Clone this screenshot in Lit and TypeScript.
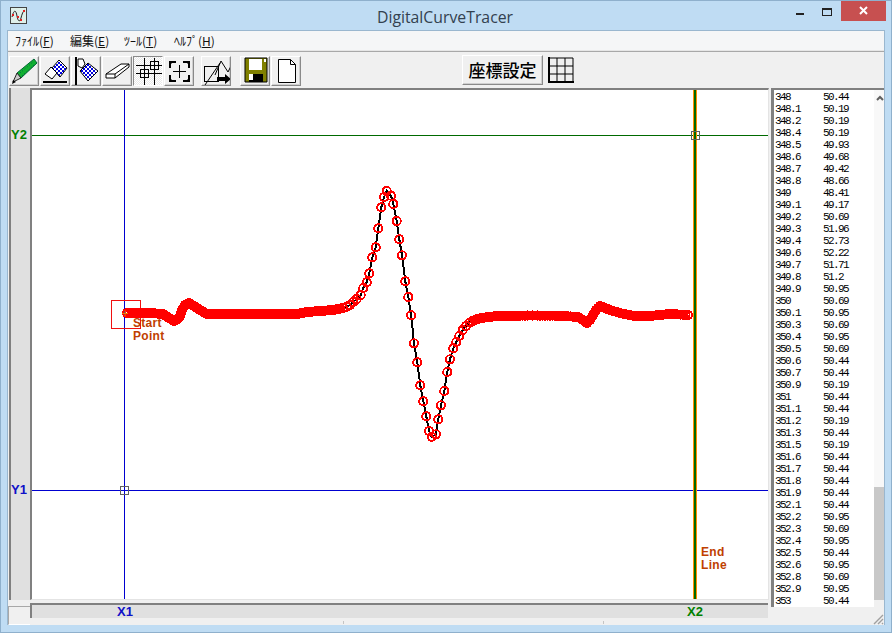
import { LitElement, html, svg, css } from "lit";
import { customElement } from "lit/decorators.js";

const ROWS: [string, string][] = [
  ["348", "50.44"], ["348.1", "50.19"], ["348.2", "50.19"], ["348.4", "50.19"], ["348.5", "49.93"],
  ["348.6", "49.68"], ["348.7", "49.42"], ["348.8", "48.66"], ["349", "48.41"], ["349.1", "49.17"],
  ["349.2", "50.69"], ["349.3", "51.96"], ["349.4", "52.73"], ["349.6", "52.22"], ["349.7", "51.71"],
  ["349.8", "51.2"], ["349.9", "50.95"], ["350", "50.69"], ["350.1", "50.95"], ["350.3", "50.69"],
  ["350.4", "50.95"], ["350.5", "50.69"], ["350.6", "50.44"], ["350.7", "50.44"], ["350.9", "50.19"],
  ["351", "50.44"], ["351.1", "50.44"], ["351.2", "50.19"], ["351.3", "50.44"], ["351.5", "50.19"],
  ["351.6", "50.44"], ["351.7", "50.44"], ["351.8", "50.44"], ["351.9", "50.44"], ["352.1", "50.44"],
  ["352.2", "50.95"], ["352.3", "50.69"], ["352.4", "50.95"], ["352.5", "50.44"], ["352.6", "50.95"],
  ["352.8", "50.69"], ["352.9", "50.95"], ["353", "50.44"],
];

type Pt = [number, number];

// flat runs of the trace, sampled densely so the markers merge into a band
const LEAD_IN: Pt[] = [
  [127, 313], [150, 313], [163, 314], [169, 318], [174, 321], [177, 319.5], [180, 316], [182, 310],
  [185, 305], [189, 303], [194, 306], [200, 310], [207, 314], [297, 314], [307, 312], [333, 310], [343, 308],
];
const LEAD_OUT: Pt[] = [
  [470, 322.3], [475, 320], [480, 318.3], [486.7, 317.3], [497, 316], [530, 315.5], [560, 315.7],
  [578, 317], [583, 320], [587, 323], [590, 320], [593, 315], [596, 310], [600, 306], [605, 308],
  [610, 310], [620, 313], [633, 315.7], [653, 315.7], [670, 314], [688, 315],
];
// the spike itself: markers are far enough apart to read one by one
const SPIKE: Pt[] = [
  [343, 308], [347, 306.7], [350, 305], [353.3, 302], [356.7, 299], [360.7, 295], [363.3, 288],
  [366.7, 282.3], [369.3, 273.3], [372.3, 257.3], [375.7, 247.3], [378.3, 228.3], [381.3, 207.3],
  [384, 197], [386.7, 191], [391, 195.7], [393.3, 204], [396.7, 221], [399.3, 239.3], [402, 255.3],
  [405.3, 281.3], [408.3, 297], [411.2, 315.3], [414, 343.3], [417.3, 362.3], [420.3, 385.3],
  [423.3, 401.3], [426.3, 416.3], [429, 431], [431.7, 436.7], [436, 434.3], [438.3, 419.3],
  [441, 405.3], [444.3, 391], [447.3, 372], [450, 359.3], [453.3, 348.3], [456.3, 342], [459.3, 336],
  [462.7, 330], [466, 326], [470, 322.3],
];

function sample(pts: Pt[], step: number): Pt[] {
  const out: Pt[] = [];
  for (let i = 0; i < pts.length - 1; i++) {
    const [x0, y0] = pts[i];
    const [x1, y1] = pts[i + 1];
    const n = Math.max(1, Math.round(Math.hypot(x1 - x0, y1 - y0) / step));
    for (let k = 0; k < n; k++) {
      out.push([x0 + ((x1 - x0) * k) / n, y0 + ((y1 - y0) * k) / n]);
    }
  }
  out.push(pts[pts.length - 1]);
  return out;
}

const pointList = (pts: Pt[]) => pts.map((p) => p.join(",")).join(" ");

const MARKERS = [...sample(LEAD_IN, 2.6), ...SPIKE, ...sample(LEAD_OUT, 2.6)];
const TRACE = pointList([...LEAD_IN, ...SPIKE, ...LEAD_OUT]);

const dots = svg`<defs>
  <pattern id="chk" width="4" height="4" patternUnits="userSpaceOnUse">
    <rect width="4" height="4" fill="#fff"></rect>
    <rect width="2" height="2" fill="#0000e0"></rect>
    <rect x="2" y="2" width="2" height="2" fill="#0000e0"></rect>
  </pattern>
</defs>`;

const ICONS = {
  pencil: svg`<polygon points="8,17 25,3 28,7 12,22" fill="#10b030" stroke="#063"></polygon>
    <path d="M11 17l13-11M13 20l12-11" stroke="#064" stroke-dasharray="1 2"></path>
    <polygon points="8,17 12,22 4,26" fill="#ccc" stroke="#222"></polygon>
    <polygon points="3,28 4,24 7,26" fill="#000"></polygon>`,
  erasePoint: svg`${dots}<polygon points="19,4 27,12 20,21 12,12" fill="url(#chk)" stroke="#000"></polygon>
    <polygon points="11,11 17,17 12,23 5,18" fill="#fff" stroke="#000"></polygon>
    <rect x="3" y="25" width="24" height="2" fill="#000"></rect>`,
  eraseFill: svg`${dots}<rect x="4" y="1" width="2" height="28" fill="#000"></rect>
    <polygon points="7,3 12,3 14,8 11,12 7,10" fill="#fff" stroke="#000"></polygon>
    <polygon points="17,7 27,15 17,25 9,15" fill="url(#chk)" stroke="#000"></polygon>`,
  eraser: svg`<polygon points="4,18 19,8 27,8 27,11 13,22 4,22" fill="#fff" stroke="#000"></polygon>
    <path d="M4 18h9v4M13 18l14-10" fill="none" stroke="#000"></path>`,
  cross: svg`<g stroke="#000" fill="none" shape-rendering="crispEdges">
      <path d="M11.5 2v27M21.5 2v27M3 9.5h26M3 17.5h26" stroke-width="1"></path>
      <rect x="7.5" y="13.5" width="8" height="8"></rect>
      <rect x="17.5" y="5.5" width="8" height="8"></rect>
    </g>`,
  fit: svg`<path d="M15.5 9v13M9 15.5h13" stroke="#000" fill="none"></path>
    <path d="M5 5h7v2H8l-1 1v4H5zM26 5h-7v2h4l1 1v4h2zM5 26h7v-2H8l-1-1v-4H5zM26 26h-7v-2h4l1-1v-4h2z" fill="#000"></path>`,
  trace: svg`<rect x="3.5" y="10.5" width="14" height="15" fill="none" stroke="#000"></rect>
    <path d="M4 29L19 7M14 19L20 5l7 11 6-12" fill="none" stroke="#000"></path>
    <path d="M16 21h8v-3l6 5-6 5v-3h-8z" fill="#000"></path>`,
  save: svg`<path d="M5 2h22v24H5z" fill="#808000" stroke="#000"></path>
    <rect x="9" y="3" width="13" height="11" fill="#fff"></rect>
    <rect x="24" y="3" width="2" height="3" fill="#fff"></rect>
    <rect x="9" y="18" width="14" height="8" fill="#000"></rect>
    <rect x="9" y="18" width="4" height="6" fill="#fff"></rect>`,
  page: svg`<path d="M7.5 3.5h12l5 5v18h-17z" fill="#fff" stroke="#000"></path>
    <path d="M19.5 3.5v5h5" fill="none" stroke="#000"></path>`,
};

@customElement("app-root")
export class AppRoot extends LitElement {
  static styles = css`
    :host {
      display: block;
      width: 892px;
      height: 633px;
      overflow: hidden;
    }
    .window {
      box-sizing: border-box;
      width: 892px;
      height: 633px;
      display: flex;
      flex-direction: column;
      background: #bfdcf3;
      border: 1px solid #8fb0cc;
      padding: 0 6px 7px;
    }
    .titlebar {
      height: 29px;
      flex: none;
      display: flex;
      align-items: flex-start;
    }
    .appicon {
      margin: 6px 0 0 3px;
      width: 17px;
      height: 17px;
      display: block;
    }
    .title {
      flex: 1;
      text-align: center;
      font: 15.8px/32px "Open Sans", sans-serif;
      color: #33414f;
      padding-left: 74px;
    }
    .controls {
      display: flex;
      margin-right: -1px;
    }
    .ctl {
      width: 26px;
      height: 20px;
      display: block;
    }
    .close {
      width: 45px;
      height: 20px;
      background: #c75050;
      display: block;
    }
    .client {
      flex: 1;
      min-height: 0;
      display: flex;
      flex-direction: column;
      border: 1px solid #9ab7cf;
      border-bottom: 0;
      background: #f0f0f0;
      position: relative;
    }
    .menu {
      height: 20px;
      flex: none;
      box-sizing: border-box;
      display: flex;
      align-items: center;
      padding-left: 7px;
      background: #f5f6f7;
      font: 12px "Noto Sans CJK JP", sans-serif;
      color: #111;
      border-bottom: 1px solid #e6e6e6;
    }
    .menu span {
      flex: none;
      white-space: nowrap;
    }
    .menu span:nth-child(1) { width: 55px; }
    .menu span:nth-child(2) { width: 54px; }
    .menu span:nth-child(3) { width: 50px; }
    .toolbar {
      height: 37px;
      flex: none;
      box-sizing: border-box;
      border-top: 1px solid #a8a8a8;
      display: flex;
      align-items: flex-start;
      padding: 4px 0 0 1px;
      gap: 1px;
    }
    .btn {
      box-sizing: border-box;
      width: 30px;
      height: 30px;
      background: #f0f0f0;
      border: 1px solid;
      border-color: #fff #8a8a8a #8a8a8a #fff;
      box-shadow: inset -1px -1px 0 #d0d0d0;
      padding: 0;
    }
    .btn svg {
      display: block;
      width: 28px;
      height: 28px;
    }
    .btn.on {
      background: repeating-conic-gradient(#fff 0 25%, #e8e8e8 0 50%) 0 0 / 2px 2px;
      border-color: #8a8a8a #fff #fff #8a8a8a;
      box-shadow: none;
    }
    .gap-a { margin-left: 6px; }
    .gap-b { margin-left: 8px; }
    .coord {
      margin: -1px 0 0 160px;
      box-sizing: border-box;
      width: 81px;
      height: 30px;
      border: 1px solid;
      border-color: #fff #8a8a8a #8a8a8a #fff;
      box-shadow: inset -1px -1px 0 #d0d0d0;
      text-align: center;
      font: 500 17px/27px "Noto Sans CJK JP", sans-serif;
      color: #000;
    }
    .gridicon {
      margin: 1px 0 0 4px;
      width: 26px;
      height: 26px;
      display: block;
    }
    .main {
      flex: 1;
      min-height: 0;
      display: flex;
    }
    .left {
      width: 762px;
      flex: none;
      display: grid;
      grid-template-columns: 22px 739px;
      grid-template-rows: 512px 3px 15px 7px;
    }
    .ruler-y {
      margin-left: 1px;
      border-left: 2px solid #808080;
      background: #e0e0e0;
      position: relative;
    }
    .canvas {
      box-sizing: border-box;
      border-left: 2px solid #808080;
      border-top: 2px solid #808080;
      border-right: 1px solid #e4e4e4;
      border-bottom: 1px solid #e4e4e4;
      background: #fff;
      position: relative;
      overflow: hidden;
    }
    .canvas svg {
      display: block;
      width: 736px;
      height: 509px;
    }
    .note {
      position: absolute;
      font: bold 12px/13px "Liberation Sans", sans-serif;
      color: #c04000;
      letter-spacing: 0.3px;
    }
    .axis {
      position: absolute;
      font: bold 13px/14px "Liberation Sans", sans-serif;
      transform: translate(-50%, -50%);
    }
    .corner {
      grid-column: 1;
      grid-row: 2 / 5;
      margin-top: 6px;
      border-top: 1px solid #a8a8a8;
      border-left: 1px solid #a8a8a8;
      border-bottom: 1px solid #fff;
    }
    .ruler-x {
      grid-column: 2;
      grid-row: 3;
      box-sizing: border-box;
      border-left: 2px solid #808080;
      border-top: 2px solid #808080;
      background: #e0e0e0;
      position: relative;
      margin-right: 1px;
    }
    .status {
      grid-column: 2;
      grid-row: 4;
      position: relative;
    }
    .tick {
      position: absolute;
      bottom: 1px;
      width: 1px;
      height: 3px;
      background: #c4c4c4;
    }
    .listcol {
      flex: 1;
      display: flex;
      flex-direction: column;
      padding-left: 1px;
    }
    .list {
      height: 519px;
      flex: none;
      box-sizing: border-box;
      border-left: 3px solid #808080;
      border-top: 2px solid #808080;
      display: flex;
    }
    .rows {
      width: 100px;
      flex: none;
      background: #fff;
      overflow: hidden;
      padding-top: 1px;
      box-sizing: border-box;
      font: 11px/12px "Liberation Mono", monospace;
      letter-spacing: -1.6px;
      color: #000;
    }
    .row {
      display: flex;
      height: 12px;
      padding-left: 1px;
    }
    .row b {
      font-weight: 400;
      width: 48px;
    }
    .row i {
      font-style: normal;
    }
    .scroll {
      flex: 1;
      height: 510px;
      background: #f8f8f8;
      display: flex;
      flex-direction: column;
      justify-content: space-between;
      align-items: stretch;
    }
    .scroll svg {
      display: block;
      margin: 5px 0 0 2px;
    }
    .thumb {
      height: 113px;
      background: #c8c8c8;
    }
    .grip {
      position: absolute;
      right: 0;
      bottom: 0;
      display: block;
    }
  `;

  private _btn(icon: unknown, cls = "") {
    return html`<div class="btn ${cls}">
      <svg viewBox="1 1 28 28">${icon}</svg>
    </div>`;
  }

  render() {
    return html`
      <div class="window">
        <div class="titlebar">
          <svg class="appicon" viewBox="0 0 17 17">
            <rect x="0.5" y="0.5" width="16" height="16" fill="#dff0ea" stroke="#444"></rect>
            <path d="M2 10C4 2 6 3 7 9s3 6 4 2 2-7 4-8" fill="none" stroke="#222"></path>
            <g fill="#e02020">
              <rect x="2" y="7" width="2" height="2"></rect>
              <rect x="7" y="9" width="2" height="2"></rect>
              <rect x="10" y="12" width="2" height="2"></rect>
              <rect x="13" y="3" width="2" height="2"></rect>
            </g>
          </svg>
          <div class="title">DigitalCurveTracer</div>
          <div class="controls">
            <svg class="ctl" viewBox="0 0 26 20"><rect x="7" y="12" width="8" height="2" fill="#222"></rect></svg>
            <svg class="ctl" viewBox="0 0 26 20">
              <rect x="7.5" y="7.5" width="9" height="7" fill="none" stroke="#222"></rect>
              <rect x="7" y="7" width="10" height="2" fill="#222"></rect>
            </svg>
            <svg class="close" viewBox="0 0 45 20">
              <path d="M19 6l7 7M26 6l-7 7" stroke="#fff" stroke-width="2"></path>
            </svg>
          </div>
        </div>
        <div class="client">
          <div class="menu">
            <span>ﾌｧｲﾙ(<u>F</u>)</span>
            <span>編集(<u>E</u>)</span>
            <span>ﾂｰﾙ(<u>T</u>)</span>
            <span>ﾍﾙﾌﾟ(<u>H</u>)</span>
          </div>
          <div class="toolbar">
            ${this._btn(ICONS.pencil)}${this._btn(ICONS.erasePoint)}${this._btn(ICONS.eraseFill)}${this._btn(ICONS.eraser)}
            ${this._btn(ICONS.cross, "on")}${this._btn(ICONS.fit)}
            ${this._btn(ICONS.trace, "gap-a")}
            ${this._btn(ICONS.save, "gap-b")}${this._btn(ICONS.page)}
            <div class="coord">座標設定</div>
            <svg class="gridicon" viewBox="0 0 26 26">
              <path d="M1 1v24M9 1v24M17 1v24M25 1v24M1 1h24M1 9h24M1 17h24M1 24.5h25" fill="none" stroke="#000"></path>
              <rect x="0" y="0" width="2" height="26" fill="#000"></rect>
              <rect x="0" y="24" width="26" height="2" fill="#000"></rect>
            </svg>
          </div>
          <div class="main">
            <div class="left">
              <div class="ruler-y">
                <span class="axis" style="left:8px;top:47px;color:#008000">Y2</span>
                <span class="axis" style="left:8px;top:402px;color:#1010c8">Y1</span>
              </div>
              <div class="canvas">
                <svg viewBox="32 90 736 509">
                  <g shape-rendering="crispEdges" fill="none">
                    <path d="M32 135.5H769" stroke="#006a00"></path>
                    <path d="M32 490.5H769" stroke="#0000d0"></path>
                    <path d="M124.5 90V600" stroke="#0000d0"></path>
                    <rect x="693" y="90" width="4" height="510" fill="#ff8c00"></rect>
                    <rect x="694" y="90" width="2" height="510" fill="#006a00"></rect>
                    <rect x="120.5" y="486.5" width="8" height="8" stroke="#606060"></rect>
                    <rect x="691.5" y="131.5" width="8" height="8" stroke="#606060"></rect>
                    <rect x="111.5" y="300.5" width="29" height="28" stroke="#f01010"></rect>
                  </g>
                  <g shape-rendering="crispEdges">
                    <polyline points=${TRACE} fill="none" stroke="#000" stroke-width="2"></polyline>
                    <polyline points=${pointList(LEAD_IN)} fill="none" stroke="#ff0000" stroke-width="7"></polyline>
                    <polyline points=${pointList(LEAD_OUT)} fill="none" stroke="#ff0000" stroke-width="7"></polyline>
                    <g fill="none" stroke="#ff0000" stroke-width="1.9">
                      ${MARKERS.map(
                        ([x, y]) => svg`<circle cx=${x} cy=${y} r="4.1"></circle>`
                      )}
                    </g>
                  </g>
                  <path d="M122 313.5h6M125 310.5v6" stroke="#f08000" fill="none"></path>
                </svg>
                <div class="note" style="left:101px;top:227px">Start<br />Point</div>
                <div class="note" style="left:669px;top:456px">End<br />Line</div>
              </div>
              <div class="corner"></div>
              <div class="ruler-x">
                <span class="axis" style="left:93px;top:7px;color:#1010c8">X1</span>
                <span class="axis" style="left:663px;top:7px;color:#008000">X2</span>
              </div>
              <div class="status">
                <span class="tick" style="left:313px"></span>
                <span class="tick" style="left:573px"></span>
              </div>
            </div>
            <div class="listcol">
              <div class="list">
                <div class="rows">
                  ${ROWS.map(
                    ([a, b]) => html`<div class="row"><b>${a}</b><i>${b}</i></div>`
                  )}
                </div>
                <div class="scroll">
                  <svg width="8" height="6" viewBox="0 0 8 6">
                    <path d="M1 5l3-3 3 3" fill="none" stroke="#606060" stroke-width="2"></path>
                  </svg>
                  <div class="thumb"></div>
                </div>
              </div>
            </div>
          </div>
          <svg class="grip" width="12" height="12" viewBox="0 0 12 12">
            <path d="M11 2L2 11M11 6L6 11M11 10L10 11" stroke="#a0a0a0" stroke-width="1.4" fill="none"></path>
          </svg>
        </div>
      </div>
    `;
  }
}
